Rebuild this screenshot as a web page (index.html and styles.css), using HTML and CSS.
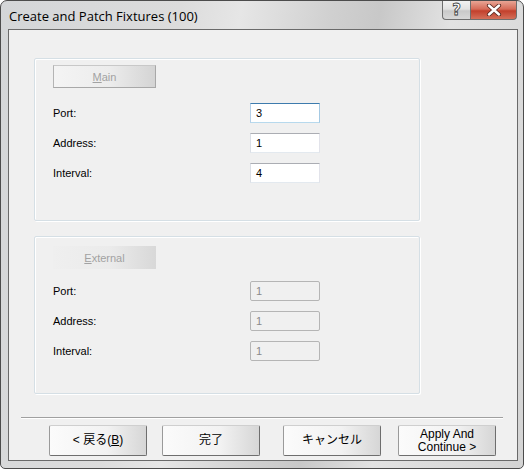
FILE: index.html
```html
<!DOCTYPE html>
<html>
<head>
<meta charset="utf-8">
<link rel="stylesheet" href="styles.css">
</head>
<body>
<div class="window">
  <div class="titlebar">
    <div class="title">Create and Patch Fixtures (100)</div>
    <div class="caption-btns">
      <div class="cap help"><span>?</span></div>
      <div class="cap close">
        <svg width="18" height="12" viewBox="0 0 18 12">
          <path d="M4 1.5 L14 10.5 M14 1.5 L4 10.5" stroke="#5a2a22" stroke-width="4.2" stroke-linecap="round"/>
          <path d="M4 1.5 L14 10.5 M14 1.5 L4 10.5" stroke="#ffffff" stroke-width="2.4" stroke-linecap="round"/>
        </svg>
      </div>
    </div>
  </div>
  <div class="client">
    <div class="group group-main">
      <div class="tab tab-main"><span class="ul">M</span>ain</div>
      <div class="row row-first"><span class="label">Port:</span><div class="field focus">3</div></div>
      <div class="row"><span class="label">Address:</span><div class="field">1</div></div>
      <div class="row"><span class="label">Interval:</span><div class="field">4</div></div>
    </div>
    <div class="group group-ext">
      <div class="tab tab-ext"><span class="ul">E</span>xternal</div>
      <div class="row row-first-ext"><span class="label">Port:</span><div class="field disabled">1</div></div>
      <div class="row"><span class="label">Address:</span><div class="field disabled">1</div></div>
      <div class="row"><span class="label">Interval:</span><div class="field disabled">1</div></div>
    </div>
    <div class="separator"></div>
    <div class="buttons">
      <div class="btn btn-back">&lt; 戻る(<span class="ul">B</span>)</div>
      <div class="btn btn-finish">完了</div>
      <div class="btn btn-cancel">キャンセル</div>
      <div class="btn btn-apply">Apply And<br>Continue &gt;</div>
    </div>
  </div>
</div>
</body>
</html>
```
FILE: styles.css
```css
* { box-sizing: border-box; }
html, body { margin: 0; padding: 0; background: #ffffff; }
body {
  font-family: "Liberation Sans", "Noto Sans CJK JP", sans-serif;
  font-size: 12px;
  color: #000;
}
.window {
  width: 524px;
  height: 469px;
  border: 1px solid #4c4c4c;
  border-radius: 7px 7px 5px 5px;
  background: linear-gradient(100deg, #d4d6d8 0%, #dcdcdc 30%, #e6e6e6 40%, #d0d0d0 55%, #c8c8c8 63%, #e2e2e2 75%, #d4d4d4 100%);
  padding: 0 5px 7px 7px;
  display: flex;
  flex-direction: column;
  overflow: hidden;
}
.titlebar {
  height: 28px;
  display: flex;
  justify-content: space-between;
  align-items: flex-start;
  flex: none;
}
.title {
  padding: 6px 0 0 1px;
  font-family: "Open Sans", "Liberation Sans", sans-serif;
  font-size: 13px;
  color: #000000;
}
.caption-btns {
  display: flex;
  margin-right: 1px;
}
.cap {
  height: 19px;
  border: 1px solid #6e6e6e;
  border-top: none;
  display: flex;
  align-items: center;
  justify-content: center;
}
.help {
  width: 28px;
  border-radius: 0 0 0 4px;
  border-right: none;
  background: linear-gradient(#f2f2f2, #e2e2e2 45%, #c9c9c9 55%, #d8d8d8);
  font-family: "DejaVu Sans", sans-serif;
  font-weight: bold;
  font-size: 15px;
  color: #ffffff;
  -webkit-text-stroke: 0.8px #3a3a3a;
}
.close {
  width: 47px;
  border-radius: 0 0 4px 0;
  background: linear-gradient(#e8a595, #d56b58 45%, #c2402c 55%, #d4705a);
}
.client {
  flex: 1;
  border: 1px solid #6a6a6a;
  background: #f0f0f0;
  display: flex;
  flex-direction: column;
}
.group {
  margin-left: 25px;
  width: 386px;
  border: 1px solid #d5dfe5;
  border-radius: 2px;
  box-shadow: inset 1px 1px 0 #ffffff, 1px 1px 0 #ffffff;
  padding-left: 18px;
  display: flex;
  flex-direction: column;
}
.group-main { margin-top: 28px; height: 163px; }
.group-ext { margin-top: 15px; height: 158px; }
.tab {
  width: 103px;
  height: 23px;
  display: flex;
  align-items: center;
  justify-content: center;
  color: #a2a2a2;
  font-size: 11px;
}
.tab-main {
  margin-top: 6px;
  border: 1px solid;
  border-color: #c8c8c8 #a8a8a8 #a8a8a8 #b4b4b4;
  background: linear-gradient(to right, #f4f4f4, #ececec 55%, #d4d4d4);
}
.tab-ext {
  margin-top: 9px;
  background: linear-gradient(to right, #efefef, #ebebeb 55%, #d8d8d8);
}
.ul { text-decoration: underline; }
.row {
  display: flex;
  align-items: center;
  height: 20px;
  margin-top: 10px;
}
.row-first { margin-top: 15px; }
.row-first-ext { margin-top: 12px; }
.label {
  width: 197px;
  font-size: 11px;
}
.field {
  width: 70px;
  height: 20px;
  background: #ffffff;
  border: 1px solid;
  border-color: #abadb3 #e2e3ea #e3e9ef #dbdfe6;
  padding: 1px 0 0 5px;
  font-size: 11px;
  line-height: 16px;
}
.field.focus {
  border-color: #3d7bad #a4c9e3 #b7d9ed #b5cfe7;
}
.field.disabled {
  background: #f0f0f0;
  border: 1px solid #b5b5b5;
  border-radius: 2px;
  color: #8a8a8a;
}
.separator {
  margin: 23px 14px 0 12px;
  height: 2px;
  border-top: 1px solid #a0a0a0;
  border-bottom: 1px solid #ffffff;
}
.buttons {
  display: flex;
  margin-top: 6px;
  padding-left: 40px;
}
.btn {
  width: 98px;
  height: 31px;
  border: 1px solid;
  border-color: #cfcfcf #6e6e6e #6e6e6e #9a9a9a;
  border-radius: 2px;
  background: linear-gradient(to right, #fbfbfb, #f2f2f2 60%, #d6d6d6);
  display: flex;
  align-items: center;
  justify-content: center;
  text-align: center;
  font-size: 12px;
  line-height: 13px;
}
.btn-finish { margin-left: 15px; }
.btn-cancel { margin-left: 23px; }
.btn-apply { margin-left: 17px; }
```
